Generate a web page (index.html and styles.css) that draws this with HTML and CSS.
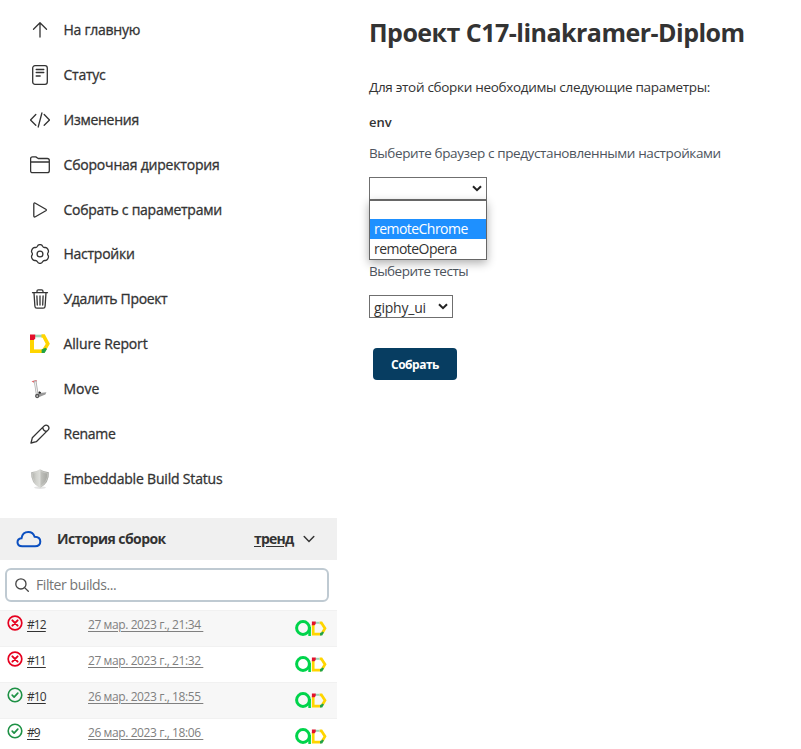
FILE: index.html
```
<!DOCTYPE html>
<html lang="ru">
<head>
<meta charset="utf-8">
<title>C17-linakramer-Diplom [Jenkins]</title>
<link rel="stylesheet" href="styles.css">
</head>
<body>
<svg class="defs" aria-hidden="true">
  <defs>
    <symbol id="allure-d" viewBox="0 0 20 20">
      <path d="M2 6V18" stroke="#ffd500" stroke-width="4"/>
      <path d="M0 17.200H13" stroke="#ffd500" stroke-width="3.600"/>
      <path d="M5 2H12" stroke="#9ed6b8" stroke-width="2.600"/>
      <path d="M11.500 2h2.200L17.800 9.800L13.800 16.500" fill="none" stroke="#ffd500" stroke-width="3.600"/>
      <path d="M0 .6H5.200V4.200L4 6H0Z" fill="#e3102b"/>
      <path d="M11.600 15.600 15.400 13.800 17 15 14.600 19H11.600Z" fill="#21a345"/>
    </symbol>
    <symbol id="qa" viewBox="0 0 32 18">
      <circle cx="8" cy="9" r="6.400" fill="none" stroke="#00d44b" stroke-width="3"/>
      <path d="M14.600 8V17" stroke="#00d44b" stroke-width="2.600"/>
      <path d="M18.200 5v10.200H26M24.600 3.800h1.800l3.600 5.600-2.600 4.400" fill="none" stroke="#ffd500" stroke-width="2.700"/>
      <path d="M20 3.800h4.600" stroke="#9ed6b8" stroke-width="2"/>
      <path d="M16.900 2.400h3.800v2.700L19.500 6.200H16.900Z" fill="#e3102b"/>
      <path d="M25 14.200l2.600-1.700 1.300 1-1.700 3H25Z" fill="#21a345"/>
    </symbol>
    <symbol id="fail" viewBox="0 0 16 16">
      <circle cx="8" cy="8" r="6.800" fill="none" stroke="#e6001f" stroke-width="1.700"/>
      <path d="M5.400 5.400l5.200 5.200M10.600 5.400l-5.200 5.200" stroke="#e6001f" stroke-width="2" stroke-linecap="round"/>
    </symbol>
    <symbol id="ok" viewBox="0 0 16 16">
      <circle cx="8" cy="8" r="6.800" fill="none" stroke="#1e9145" stroke-width="1.600"/>
      <path d="M5.200 8.200l1.900 1.900 3.700-4" fill="none" stroke="#1e9145" stroke-width="1.700" stroke-linecap="round" stroke-linejoin="round"/>
    </symbol>
    <linearGradient id="steel" x1="0" x2="1" y1="0" y2="0">
      <stop offset="0" stop-color="#aaaba6"/><stop offset=".28" stop-color="#d0d1cc"/><stop offset=".5" stop-color="#dddeda"/><stop offset=".55" stop-color="#c0c1bc"/><stop offset="1" stop-color="#a0a19c"/>
    </linearGradient>
  </defs>
</svg>
<div class="page">
  <aside class="side">
    <nav class="tasks">
      <a class="task"><svg class="icon" viewBox="0 0 20 20"><path d="M10 17V3.200M3.500 9.200 10 2.800l6.500 6.400"/></svg><span class="t-home">На главную</span></a>
      <a class="task"><svg class="icon" viewBox="0 0 20 20"><rect x="2.700" y=".7" width="14.600" height="18.600" rx="2.300"/><path d="M6.200 4.500h7.600M6.200 7.500h7.600M6.200 11h4"/></svg><span class="t-status">Статус</span></a>
      <a class="task"><svg class="icon" viewBox="0 0 20 20"><path d="M5.800 4.500.5 10l5.300 5.300M14.200 4.500l5.300 5.500-5.300 5.300M11.900 3 8.200 17"/></svg><span class="t-changes">Изменения</span></a>
      <a class="task"><svg class="icon" viewBox="0 0 20 20"><path d="M.6 15.700V3.800Q.6 1.900 2.500 1.900h3.300L8.200 3.500h9Q19.300 3.500 19.300 5.500v10.200q0 2-2 2H2.600q-2 0-2-2ZM.6 7h18.700"/></svg><span class="t-dir">Сборочная директория</span></a>
      <a class="task"><svg class="icon" viewBox="0 0 20 20"><path d="M3.800 4.100v11.700q0 1.800 1.600.9l10.400-6q1.100-.7 0-1.400L5.400 3.200q-1.600-.9-1.600.9Z"/></svg><span class="t-build">Собрать с параметрами</span></a>
      <a class="task"><svg class="icon" viewBox="0 0 20 20"><circle cx="10" cy="10" r="2.900"/><path d="M7.400 2.200Q8.100.6 10 .6t2.600 1.600q.7 1.500 2.400 1.300 1.700-.2 2.600 1.400 1.500 2.600.5 3.600-1 1.500 0 3 1 1.200-.5 3.600-.9 1.600-2.600 1.400-1.700-.2-2.400 1.300Q11.900 19.400 10 19.400t-2.600-1.600Q6.700 16.300 5 16.500q-1.700.2-2.600-1.400-1.500-2.400-.5-3.600 1-1.500 0-3-1-1 .5-3.600Q3.300 3.300 5 3.500q1.700.2 2.400-1.300Z"/></svg><span class="t-config">Настройки</span></a>
      <a class="task"><svg class="icon" viewBox="0 0 20 20"><path d="M2.500 3.700h15M4 3.700l.9 13.500q.1 1.900 1.900 1.900h6.400q1.800 0 1.900-1.900L16 3.700M7 3.500V2.200Q7 .8 8.400.8h3.200Q13 .8 13 2.200v1.300M10 7v9M6.900 7l.4 9M13.100 7l-.4 9"/></svg><span class="t-delete">Удалить Проект</span></a>
      <a class="task"><svg class="icon plain"><use href="#allure-d"/></svg><span class="t-allure">Allure Report</span></a>
      <a class="task"><svg class="icon plain" viewBox="0 0 20 20"><path d="M1.500 2.300l5-1.200.4 1.300-3.200.4.600 1.200Z" fill="#e25b60"/><path d="M5.100 1.600 7.300 16" fill="none" stroke="#aaa" stroke-width="2.600"/><path d="M5.100 2.600 7.100 15" fill="none" stroke="#eee" stroke-width="1.100"/><path d="M6 16 10 14l6.400-.8-1 2.400-7.400 3Z" fill="#999"/><path d="M9 12.200l2.200 1-1 1.500-2-.5Z" fill="#222"/><circle cx="7.200" cy="17" r="1.500" fill="#ddd" stroke="#555"/></svg><span class="t-move">Move</span></a>
      <a class="task"><svg class="icon" viewBox="0 0 20 20"><path d="M1 19l1.300-5.200L14.200 1.900q1.900-1.700 3.900.1 1.700 2 .1 3.900L6.300 17.700ZM12.900 3.400q.1 3.800 4 3.800"/></svg><span class="t-rename">Rename</span></a>
      <a class="task"><svg class="icon plain" viewBox="0 0 20 20"><ellipse cx="10" cy="18.600" rx="6" ry="1.300" fill="#e4e4e4"/><path d="M10 .3Q14 3 18.800 3.200 19.600 14 10 19 .4 14 1.200 3.200 6 3 10 .3Z" fill="url(#steel)"/><path d="M10 1.500Q13.500 3.900 17.700 4.200 18 13.300 10 17.800 2 13.300 2.300 4.200 6.500 3.900 10 1.500Z" fill="none" stroke="#d8d8d5" stroke-width=".5"/></svg><span class="t-embed">Embeddable Build Status</span></a>
    </nav>
    <section class="history">
      <header class="history-head">
        <svg class="cloud" viewBox="0 0 26 18"><path d="M6.300 16.300Q1.500 16.200 1.500 12.300q0-3.400 4-4Q6.500 2 12.300 2q4.700 0 6.300 4.700 5.700.2 5.700 4.800 0 4.800-5.300 4.800Z"/></svg>
        <h2>История сборок</h2>
        <a class="trend">тренд</a>
        <svg class="chev" viewBox="0 0 12 8"><path d="M1.200 1.500 6 6.400l4.800-4.900"/></svg>
      </header>
      <label class="filter"><svg viewBox="0 0 14 14"><circle cx="5.900" cy="5.900" r="5.100"/><path d="M9.600 9.600 13.300 13.300"/></svg><span>Filter builds...</span></label>
      <div class="builds">
        <div class="build"><svg class="state"><use href="#fail"/></svg><span class="num"><a>#12</a></span><span class="date"><a>27 мар. 2023 г., 21:34&nbsp;</a></span><svg class="qa"><use href="#qa"/></svg></div>
        <div class="build"><svg class="state"><use href="#fail"/></svg><span class="num"><a>#11</a></span><span class="date"><a>27 мар. 2023 г., 21:32&nbsp;</a></span><svg class="qa"><use href="#qa"/></svg></div>
        <div class="build"><svg class="state"><use href="#ok"/></svg><span class="num"><a>#10</a></span><span class="date"><a>26 мар. 2023 г., 18:55&nbsp;</a></span><svg class="qa"><use href="#qa"/></svg></div>
        <div class="build"><svg class="state"><use href="#ok"/></svg><span class="num"><a>#9</a></span><span class="date"><a>26 мар. 2023 г., 18:06&nbsp;</a></span><svg class="qa"><use href="#qa"/></svg></div>
      </div>
    </section>
  </aside>
  <main class="main">
    <h1>Проект C17-linakramer-Diplom</h1>
    <p class="intro">Для этой сборки необходимы следующие параметры:</p>
    <p class="param">env</p>
    <p class="hint">Выберите браузер с предустановленными настройками</p>
    <div class="select env">
      <svg class="arrow" viewBox="0 0 10 7"><path d="M1 1.200l4 4 4-4"/></svg>
      <div class="menu">
        <div class="option"></div>
        <div class="option active">remoteChrome</div>
        <div class="option">remoteOpera</div>
      </div>
    </div>
    <p class="hint tests">Выберите тесты</p>
    <div class="select suite"><span>giphy_ui</span><svg class="arrow" viewBox="0 0 10 7"><path d="M1 1.200l4 4 4-4"/></svg></div>
    <button class="submit">Собрать</button>
  </main>
</div>
</body>
</html>
```
FILE: styles.css
```
* { box-sizing: border-box; }
body {
  margin: 0;
  height: 749px;
  overflow: hidden;
  background: #fff;
  color: #333;
  font: 14px/20px "Open Sans", "Noto Sans", sans-serif;
}
h1, h2, p { margin: 0; }
.defs { position: absolute; width: 0; height: 0; }
.page { display: flex; height: 749px; overflow: hidden; }
.side { width: 337px; flex: none; }
.tasks { height: 518px; padding-top: 7.500px; }
.task {
  display: flex;
  align-items: center;
  height: 44.900px;
  padding-left: 30px;
  gap: 13.500px;
  font-size: 14px;
  letter-spacing: -.26px;
  -webkit-text-stroke: .3px #333;
  white-space: nowrap;
}
.t-dir, .t-embed { letter-spacing: -.19px; }
.t-delete { letter-spacing: -.35px; }
.t-allure { letter-spacing: -.15px; }
.t-move { letter-spacing: 0; }
.icon { width: 20px; height: 20px; flex: none; fill: none; stroke: #333; stroke-width: 1.300; stroke-linecap: round; stroke-linejoin: round; }
.icon.plain { stroke: none; stroke-linecap: butt; stroke-linejoin: miter; }

.history-head {
  display: flex;
  align-items: center;
  height: 42px;
  padding-left: 16px;
  background: #f0f0f0;
}
.cloud { width: 26px; height: 18px; fill: none; stroke: #0b4fc0; stroke-width: 2; }
.history-head h2 { width: 197px; margin: -1px 0 0 15px; font-size: 14px; font-weight: 700; line-height: 20px; letter-spacing: -.58px; white-space: nowrap; }
.trend { width: 40px; margin-top: -1px; font-weight: 700; letter-spacing: -.8px; text-decoration: underline; text-underline-offset: 2px; }
.chev { width: 12px; height: 8px; margin-left: 9px; fill: none; stroke: #333; stroke-width: 1.500; stroke-linecap: round; }
.filter {
  display: flex;
  align-items: center;
  gap: 7px;
  width: 324px;
  height: 34px;
  margin: 8px 0 8px 5px;
  padding-left: 8px;
  border: 2px solid #bfcad2;
  border-radius: 6px;
  color: #757575;
  letter-spacing: -.42px;
}
.filter svg { width: 14px; height: 14px; fill: none; stroke: #444; stroke-width: 1.300; stroke-linecap: round; }
.build {
  display: flex;
  align-items: flex-start;
  height: 36px;
  padding: 5px 0 0 7px;
  border-top: 1px solid #f1f1f1;
  font-size: 12px;
  line-height: 18px;
}
.build:nth-child(odd) { background: #f7f7f7; }
.build a { text-decoration: underline; text-underline-offset: 2px; }
.state { width: 16px; height: 16px; margin-top: -1px; }
.num { width: 61px; margin-left: 4px; letter-spacing: -.9px; }
.date { width: 207px; color: #808080; letter-spacing: -.41px; white-space: nowrap; }
.qa { width: 32px; height: 18px; margin-top: 3px; }

.main { width: 432px; padding: 15px 0 0 32px; }
h1 { font-size: 25px; line-height: 34px; font-weight: 700; letter-spacing: -.52px; white-space: nowrap; }
.intro { margin-top: 28px; letter-spacing: -.31px; }
.param { margin-top: 15px; font-weight: 600; font-size: 13px; }
.hint { margin-top: 11px; color: #4d545d; letter-spacing: -.38px; }
.intro, .hint { font-size: 13.500px; white-space: nowrap; }
.select { display: flex; align-items: center; position: relative; height: 23px; border: 1px solid #6f6f6f; background: #fff; }
.env { width: 118px; margin-top: 14px; justify-content: flex-end; padding-right: 4px; }
.suite { width: 84px; margin-top: 14px; padding: 0 4px; justify-content: space-between; letter-spacing: -.2px; }
.suite span { position: relative; top: 1px; }
.arrow { width: 10px; height: 7px; fill: none; stroke: #222; stroke-width: 2; }
.menu {
  position: absolute;
  top: 22px;
  left: -1px;
  z-index: 2;
  width: 118px;
  border: 1px solid #666;
  background: #fff;
  box-shadow: 0 3px 9px rgba(0, 0, 0, .32);
}
.option { height: 20px; padding-left: 4px; line-height: 20px; letter-spacing: -.54px; white-space: nowrap; }
.option:first-child { height: 18px; }
.option.active { background: #1e90ff; color: #fff; }
.hint.tests { margin-top: 61px; letter-spacing: -.5px; }
.submit {
  display: block;
  width: 84px;
  height: 32px;
  margin: 30px 0 0 4px;
  padding: 1px 0 0;
  border: 0;
  border-radius: 4px;
  background: #073d61;
  color: #fff;
  font: 700 12px/20px "Open Sans", sans-serif;
  letter-spacing: -.5px;
}
```
